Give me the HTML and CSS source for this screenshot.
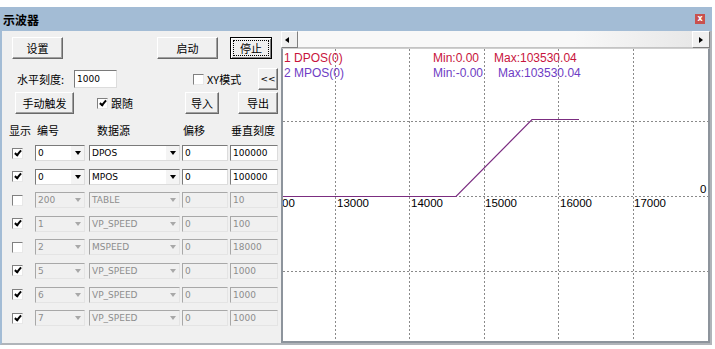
FILE: index.html
```html
<!DOCTYPE html>
<html lang="zh-CN">
<head>
    <meta charset="UTF-8">
    <title>示波器</title>
    <link rel="stylesheet" href="styles.css">
</head>
<body>
<div class="window">
    <div class="titlebar">
        <span class="title">示波器</span>
        <span class="close">x</span>
    </div>
    <div class="content">
        <!-- 左侧设置面板 -->
        <div class="panel">
            <div class="bar bar-top">
                <div class="btn btn-set">设置</div>
                <div class="btn btn-start">启动</div>
                <div class="btn btn-stop"><span class="focus">停止</span></div>
            </div>
            <div class="bar bar-scale">
                <span class="lbl lbl-scale">水平刻度:</span>
                <span class="field field-scale">1000</span>
                <span class="chk chk-xy"></span>
                <span class="lbl lbl-after">XY模式</span>
                <div class="btn btn-fold">&lt;&lt;</div>
            </div>
            <div class="bar bar-trig">
                <div class="btn btn-trig">手动触发</div>
                <span class="chk on chk-follow"></span>
                <span class="lbl lbl-after">跟随</span>
                <div class="btn btn-import">导入</div>
                <div class="btn btn-export">导出</div>
            </div>
            <div class="head">
                <span class="h-show">显示</span>
                <span class="h-num">编号</span>
                <span class="h-src">数据源</span>
                <span class="h-off">偏移</span>
                <span>垂直刻度</span>
            </div>
            <div class="channels">
                <div class="ch">
                    <span class="chk on"></span>
                    <span class="combo c-num"><b>0</b><i></i></span>
                    <span class="combo c-src"><b>DPOS</b><i></i></span>
                    <span class="field f-off">0</span>
                    <span class="field f-v">100000</span>
                </div>
                <div class="ch">
                    <span class="chk on"></span>
                    <span class="combo c-num"><b>0</b><i></i></span>
                    <span class="combo c-src"><b>MPOS</b><i></i></span>
                    <span class="field f-off">0</span>
                    <span class="field f-v">100000</span>
                </div>
                <div class="ch off">
                    <span class="chk"></span>
                    <span class="combo c-num"><b>200</b><i></i></span>
                    <span class="combo c-src"><b>TABLE</b><i></i></span>
                    <span class="field f-off">0</span>
                    <span class="field f-v">10</span>
                </div>
                <div class="ch off">
                    <span class="chk on"></span>
                    <span class="combo c-num"><b>1</b><i></i></span>
                    <span class="combo c-src"><b>VP_SPEED</b><i></i></span>
                    <span class="field f-off">0</span>
                    <span class="field f-v">100</span>
                </div>
                <div class="ch off">
                    <span class="chk"></span>
                    <span class="combo c-num"><b>2</b><i></i></span>
                    <span class="combo c-src"><b>MSPEED</b><i></i></span>
                    <span class="field f-off">0</span>
                    <span class="field f-v">18000</span>
                </div>
                <div class="ch off">
                    <span class="chk on"></span>
                    <span class="combo c-num"><b>5</b><i></i></span>
                    <span class="combo c-src"><b>VP_SPEED</b><i></i></span>
                    <span class="field f-off">0</span>
                    <span class="field f-v">1000</span>
                </div>
                <div class="ch off">
                    <span class="chk on"></span>
                    <span class="combo c-num"><b>6</b><i></i></span>
                    <span class="combo c-src"><b>VP_SPEED</b><i></i></span>
                    <span class="field f-off">0</span>
                    <span class="field f-v">1000</span>
                </div>
                <div class="ch off">
                    <span class="chk on"></span>
                    <span class="combo c-num"><b>7</b><i></i></span>
                    <span class="combo c-src"><b>VP_SPEED</b><i></i></span>
                    <span class="field f-off">0</span>
                    <span class="field f-v">1000</span>
                </div>
            </div>
        </div>

        <!-- 右侧波形区 -->
        <div class="scope">
            <div class="hscroll">
                <span class="sb-btn sb-left"></span>
                <span class="sb-track"></span>
                <span class="sb-btn sb-right"></span>
            </div>
            <div class="plot">
                <svg class="plot-svg" width="425" height="292" viewBox="0 0 425 292">
                    <g class="grid">
                        <line x1="52.5" y1="0" x2="52.5" y2="292"/>
                        <line x1="126.5" y1="0" x2="126.5" y2="292"/>
                        <line x1="201.5" y1="0" x2="201.5" y2="292"/>
                        <line x1="275.5" y1="0" x2="275.5" y2="292"/>
                        <line x1="350.5" y1="0" x2="350.5" y2="292"/>
                        <line x1="0" y1="72.5" x2="425" y2="72.5"/>
                        <line x1="0" y1="147.5" x2="425" y2="147.5"/>
                        <line x1="0" y1="222.5" x2="425" y2="222.5"/>
                    </g>
                    <polyline class="trace" points="0,147.5 173,147.5 249,70.5 296,70.5"/>
                    <g class="legend">
                        <text class="c1" x="1" y="13">1 DPOS(0)</text>
                        <text class="c1" x="150" y="13">Min:0.00</text>
                        <text class="c1" x="211" y="13">Max:103530.04</text>
                        <text class="c2" x="1" y="28">2 MPOS(0)</text>
                        <text class="c2" x="150" y="28">Min:-0.00</text>
                        <text class="c2" x="215" y="28">Max:103530.04</text>
                    </g>
                    <g class="axis">
                        <text x="-1" y="158">00</text>
                        <text x="54" y="158">13000</text>
                        <text x="128" y="158">14000</text>
                        <text x="202" y="158">15000</text>
                        <text x="277" y="158">16000</text>
                        <text x="351" y="158">17000</text>
                        <text x="417" y="144">0</text>
                    </g>
                </svg>
            </div>
        </div>
    </div>
</div>
</body>
</html>
```

FILE: styles.css
```css
body {
    margin: 0;
    background: #fff;
    font-family: "Noto Sans CJK SC", sans-serif;
    font-size: 11px;
    color: #000;
}

.window {
    width: 712px;
    margin-top: 7px;
}

/* 标题栏 */
.titlebar {
    height: 24px;
    background: #a3bcd5;
    display: flex;
    align-items: center;
    padding: 0 7px 0 3px;
}

.title {
    flex: 1;
    font-size: 12px;
    font-weight: bold;
}

.close {
    width: 10px;
    height: 10px;
    background: #c9514e;
    color: #fff;
    font: bold 8px/10px "DejaVu Sans", sans-serif;
    text-align: center;
}

.content {
    display: flex;
    height: 312px;
    background: #f0f0f0;
    border-left: 2px solid #a3bcd5;
    border-right: 2px solid #b0b4b9;
    border-bottom: 2px solid #b0b4b9;
}

/* 左侧面板 */
.panel {
    width: 279px;
    padding: 6px 3px 0 0;
    box-sizing: border-box;
}

.bar {
    display: flex;
    align-items: center;
    height: 22px;
}

.btn {
    height: 22px;
    box-sizing: border-box;
    display: flex;
    align-items: center;
    justify-content: center;
    background: #f0f0f0;
    border: 1px solid;
    border-color: #fff #696969 #696969 #fff;
    box-shadow: inset -1px -1px #a0a0a0;
}

.bar-top { padding-left: 10px; }
.btn-set { width: 51px; }
.btn-start { width: 61px; margin-left: 94px; }

.btn-stop {
    width: 42px;
    margin-left: 12px;
    border-color: #000;
    box-shadow: inset 1px 1px #fff, inset -1px -1px #808080;
}

.focus {
    border: 1px dotted #000;
    padding: 0 6px;
    line-height: 14px;
}

.bar-scale {
    margin-top: 9px;
    padding-left: 15px;
}

.lbl-scale { width: 57px; }
.lbl-after { margin-left: 3px; }

.field {
    height: 16px;
    box-sizing: border-box;
    background: #fff;
    border: 1px solid;
    border-color: #7a7a7a #dcdcdc #dcdcdc #7a7a7a;
    font: 9px/14px "DejaVu Sans", sans-serif;
    padding-left: 2px;
    white-space: nowrap;
    overflow: hidden;
}

.field-scale {
    width: 43px;
    height: 18px;
    line-height: 16px;
}

.chk {
    position: relative;
    width: 11px;
    height: 11px;
    box-sizing: border-box;
    background: #fff;
    border: 1px solid;
    border-color: #808080 #e8e8e8 #e8e8e8 #808080;
    flex-shrink: 0;
}

.chk.on::after {
    content: "";
    position: absolute;
    left: 3px;
    top: 0;
    width: 2px;
    height: 5px;
    border: solid #000;
    border-width: 0 2px 2px 0;
    transform: rotate(40deg);
}

.chk-xy { margin-left: 76px; }
.btn-fold { width: 20px; margin-left: auto; font: 9px "DejaVu Sans", sans-serif; }

.bar-trig {
    margin-top: 2px;
    padding-left: 13px;
}

.btn-trig { width: 59px; }
.chk-follow { margin-left: 23px; }
.btn-import { width: 34px; margin-left: auto; }
.btn-export { width: 40px; margin-left: 19px; }

/* 通道表头 */
.head {
    display: flex;
    height: 16px;
    line-height: 16px;
    margin-top: 8px;
    padding-left: 7px;
}

.h-show { width: 28px; }
.h-num { width: 60px; }
.h-src { width: 86px; }
.h-off { width: 48px; }

.channels {
    display: flex;
    flex-direction: column;
    gap: 7.6px;
    margin-top: 7px;
    padding-left: 10px;
}

.ch {
    display: flex;
    align-items: center;
    height: 16px;
}

.combo {
    display: flex;
    height: 16px;
    box-sizing: border-box;
    background: #fff;
    border: 1px solid;
    border-color: #7a7a7a #dcdcdc #dcdcdc #7a7a7a;
    font: 9px/14px "DejaVu Sans", sans-serif;
}

.combo b {
    flex: 1;
    font-weight: normal;
    padding-left: 2px;
}

.combo i {
    width: 13px;
    background: #f4f4f4;
    display: flex;
    align-items: center;
    justify-content: center;
}

.combo i::before {
    content: "";
    border-top: 4px solid #000;
    border-left: 3.5px solid transparent;
    border-right: 3.5px solid transparent;
}

.c-num { width: 50px; margin-left: 12px; }
.c-src { width: 91px; margin-left: 4px; }
.f-off { width: 46px; margin-left: 2px; }
.f-v { width: 48px; margin-left: 2px; }

/* 禁用的通道 */
.ch.off .combo,
.ch.off .field {
    background: #f0f0f0;
    color: #8d8d8d;
    border-color: #a8a8a8 #e4e4e4 #e4e4e4 #a8a8a8;
}

.ch.off .combo i { background: #f0f0f0; }
.ch.off .combo i::before { border-top-color: #a8a8a8; }

/* 波形区 */
.scope {
    width: 429px;
    display: flex;
    flex-direction: column;
}

.hscroll {
    height: 17px;
    display: flex;
    background: #ececec;
}

.sb-btn {
    width: 17px;
    box-sizing: border-box;
    display: flex;
    align-items: center;
    background: #f0f0f0;
    border: 1px solid;
    border-color: #fff #808080 #808080 #fff;
}

.sb-left { padding-left: 3px; }
.sb-right { width: 18px; justify-content: center; }

.sb-left::before {
    content: "";
    border-right: 4px solid #000;
    border-top: 3.5px solid transparent;
    border-bottom: 3.5px solid transparent;
}

.sb-right::before {
    content: "";
    border-left: 4px solid #000;
    border-top: 3.5px solid transparent;
    border-bottom: 3.5px solid transparent;
}

.sb-track {
    flex: 1;
    background: linear-gradient(to right, #f8f8f8 70%, #e8e8e8);
    border-bottom: 1px solid #c4c4c4;
}

.plot {
    flex: 1;
    background: #fff;
    border: solid #8d949c;
    border-width: 1px 2px 2px 2px;
    border-top-color: #cfcfcf;
    overflow: hidden;
}

.plot-svg { display: block; }

.grid line {
    stroke: #8a8a8a;
    stroke-width: 1;
    stroke-dasharray: 2 2;
    shape-rendering: crispEdges;
}

.trace {
    fill: none;
    stroke: #7b2d80;
    stroke-width: 1.2;
}

.legend text {
    font-family: "Liberation Sans", Arial, sans-serif;
    font-size: 12px;
}

.legend .c1 { fill: #c8143c; }
.legend .c2 { fill: #6e3cc4; }

.axis text {
    font-family: "Liberation Sans", Arial, sans-serif;
    font-size: 11.5px;
    fill: #000;
}
```
